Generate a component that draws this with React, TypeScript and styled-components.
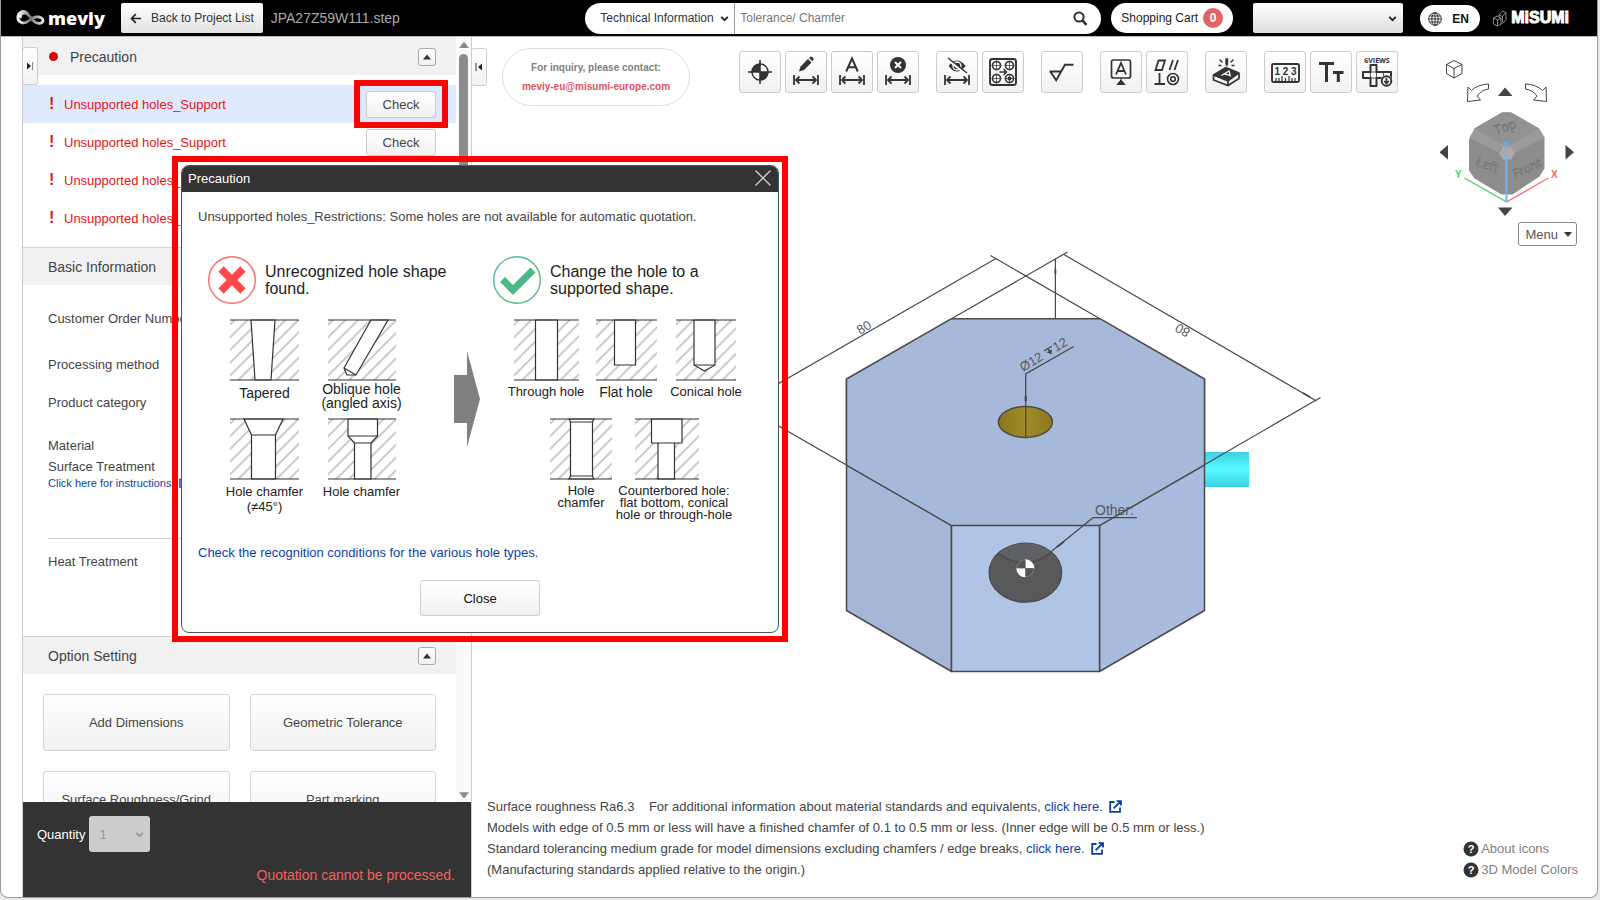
import React from "react";
import styled, { createGlobalStyle, css } from "styled-components";

const GlobalStyle = createGlobalStyle`
  *, *::before, *::after { box-sizing: border-box; }
  html, body, #root { height: 100%; }
  body {
    margin: 0;
    background: #e9e9e9;
    font-family: "Liberation Sans", Arial, sans-serif;
    font-size: 13px;
    color: #444;
  }
  button, input, select { font: inherit; color: inherit; margin: 0; }
  button { cursor: pointer; }
  a { text-decoration: none; }
  svg { display: block; flex: none; }
`;

/* ---------- shell ---------- */

const Shell = styled.div`
  height: calc(100vh - 2px);
  margin-right: 2px;
  display: flex;
  flex-direction: column;
  background: #fff;
  border: 1px solid #9a9a9a;
  border-top: 0;
  border-radius: 0 0 8px 8px;
  overflow: hidden;
`;

const Main = styled.main`
  position: relative;
  flex: 1;
  min-height: 0;
  display: flex;
  padding-left: 21px;
  border-top: 1px solid #bbb;
`;

const raised = css`
  background: linear-gradient(#fff, #f1f1f1);
  border: 1px solid #ccc;
  border-radius: 3px;
`;

/* ---------- top bar ---------- */

const TopBar = styled.header`
  flex: none;
  height: 36px;
  display: flex;
  align-items: center;
  padding: 0 28px 0 15px;
  background: #000;
  font-size: 12px;
`;

const Brand = styled.a`
  display: flex;
  align-items: center;
  gap: 3px;
  width: 105px;
  color: #fff;
  font: 800 18px/30px "Open Sans", sans-serif;
`;

const BackButton = styled.button`
  display: flex;
  align-items: center;
  gap: 9px;
  height: 30px;
  padding: 0 9px;
  border: 0;
  border-radius: 2px;
  background: linear-gradient(#fff, #e2e2e2);
  color: #333;
`;

const FileName = styled.span`
  margin-left: 8px;
  font-size: 14px;
  color: #aaa;
`;

const SearchForm = styled.form`
  display: flex;
  align-items: center;
  width: 516px;
  height: 31px;
  margin-left: auto;
  border-radius: 16px;
  background: #fff;
  overflow: hidden;
`;

const SelectWrap = styled.span<{ $w: number }>`
  position: relative;
  display: flex;
  align-items: center;
  width: ${(p) => p.$w}px;
  height: 100%;
  svg { position: absolute; right: 6px; pointer-events: none; }
`;

const TopicSelect = styled.select`
  appearance: none;
  width: 100%;
  height: 100%;
  padding: 0 16px 0 15px;
  border: 0;
  border-right: 1px solid #999;
  background: transparent;
  color: #333;
`;

const SearchInput = styled.input`
  flex: 1;
  min-width: 0;
  height: 100%;
  padding: 0 5px;
  border: 0;
  outline: 0;
  &::placeholder { color: #777; opacity: 1; }
`;

const BareButton = styled.button`
  padding: 0;
  border: 0;
  background: none;
`;

const SearchButton = styled(BareButton)`
  width: 40px;
  padding-left: 12px;
`;

const CartButton = styled.button`
  display: flex;
  align-items: center;
  gap: 5px;
  height: 30px;
  margin-left: 10px;
  padding: 0 10px;
  border: 0;
  border-radius: 15px;
  background: #fff;
  color: #222;
`;

const CartCount = styled.span`
  width: 20px;
  border-radius: 50%;
  background: #e06464;
  color: #fff;
  font-weight: 700;
  line-height: 20px;
`;

const AccountSlot = styled(SelectWrap)`
  height: 30px;
  margin-left: 20px;
`;

const AccountSelect = styled.select`
  appearance: none;
  width: 100%;
  height: 100%;
  border: 0;
  border-radius: 2px;
  background: linear-gradient(#fff, #dedede);
`;

const LanguageButton = styled.button`
  display: flex;
  align-items: center;
  justify-content: space-between;
  width: 60px;
  height: 27px;
  margin-left: 17px;
  padding: 2px 11px 0 8px;
  border: 0;
  border-radius: 14px;
  background: #fff;
  color: #111;
  font-weight: 700;
`;

const Misumi = styled.a`
  display: flex;
  align-items: center;
  justify-content: space-between;
  width: 76px;
  margin-left: 13px;
  color: #fff;
  font: 800 16px/30px "Liberation Sans", sans-serif;
  -webkit-text-stroke: 1px #fff;
  svg { -webkit-text-stroke: 0; }
`;

/* ---------- side panel ---------- */

const SidePanel = styled.aside`
  position: relative;
  flex: none;
  width: 450px;
  display: flex;
  flex-direction: column;
  border-left: 1px solid #ccc;
  border-right: 1px solid #ccc;
`;

const PanelTab = styled.button<{ $top: number; $left: number }>`
  ${raised}
  position: absolute;
  z-index: 1;
  top: ${(p) => p.$top}px;
  left: ${(p) => p.$left}px;
  width: 16px;
  height: 38px;
  padding: 0 3px;
`;

const ScrollArea = styled.div`
  flex: 1;
  min-height: 0;
  display: flex;
  overflow: hidden;
`;

const Sections = styled.div`
  flex: 1;
`;

const ScrollTrack = styled.div`
  width: 15px;
  display: flex;
  flex-direction: column;
  align-items: center;
  padding: 4px 0;
  background: #fafafa;
`;

const ScrollThumb = styled.div`
  width: 9px;
  height: 460px;
  margin: 5px 0 auto;
  border-radius: 5px;
  background: #8b8b8b;
`;

const SectionHead = styled.h2<{ $line?: boolean }>`
  display: flex;
  align-items: center;
  gap: 12px;
  height: 38px;
  margin: 0;
  padding: 0 20px 0 25px;
  border-top: 1px solid ${(p) => (p.$line ? "#d0d0d0" : "#f1f1f1")};
  background: #f1f1f1;
  font-size: 14px;
  font-weight: 400;
  color: #444;
`;

const RedDot = styled.i`
  width: 9px;
  height: 9px;
  margin-left: 1px;
  border-radius: 50%;
  background: #e60000;
`;

const Collapse = styled.button`
  ${raised}
  width: 18px;
  height: 18px;
  margin-left: auto;
  padding: 0 4px;
  border-color: #aaa;
`;

const Warnings = styled.ul`
  margin: 0;
  padding: 10px 0;
  list-style: none;
`;

const Warning = styled.li<{ $active?: boolean }>`
  display: flex;
  align-items: center;
  height: 38px;
  padding: 0 20px 0 26px;
  background: ${(p) => (p.$active ? "#dfe9fd" : "transparent")};
  color: #e81414;
  b { width: 15px; font-size: 16px; }
`;

const CheckFrame = styled.span<{ $marked?: boolean }>`
  position: relative;
  margin-left: auto;
  ${(p) => p.$marked && css`
    &::after {
      content: "";
      position: absolute;
      inset: -11px -12px -10px;
      border: 6px solid #f00;
      pointer-events: none;
    }
  `}
`;

const CheckButton = styled.button`
  ${raised}
  width: 70px;
  height: 27px;
  padding: 0;
  color: #444;
`;

const InfoList = styled.div`
  height: 351px;
  padding: 23px 20px 0 25px;
`;

const InfoRow = styled.div<{ $h: number }>`
  height: ${(p) => p.$h}px;
  line-height: 22px;
`;

const HelpLink = styled.a`
  display: flex;
  align-items: center;
  gap: 4px;
  height: 12px;
  font-size: 11px;
  color: #0b3fa8;
`;

const Rule = styled.hr`
  margin: 49px 0 12px;
  border: 0;
  border-top: 1px solid #ccc;
`;

const OptionGrid = styled.div`
  display: grid;
  grid-template-columns: 1fr 1fr;
  gap: 20px;
  padding: 20px;
`;

const OptionButton = styled.button`
  ${raised}
  height: 57px;
  border-color: #d4d4d4;
  color: #444;
`;

const QuoteBar = styled.footer`
  flex: none;
  height: 95px;
  display: flex;
  flex-direction: column;
  justify-content: space-between;
  padding: 14px 16px 14px;
  background: #333;
  color: #fff;
`;

const QuantityRow = styled.div`
  display: flex;
  align-items: center;
  gap: 4px;
  height: 36px;
  margin-left: -2px;
`;

const QuantitySelect = styled.select`
  appearance: none;
  width: 100%;
  height: 100%;
  padding: 0 10px;
  border: 0;
  border-radius: 3px;
  background: #ccc;
  color: #999;
  opacity: 1;
`;

const QuoteError = styled.p`
  margin: 0;
  text-align: right;
  font-size: 14px;
  color: #f0625f;
`;

/* ---------- viewer ---------- */

const Viewer = styled.section`
  position: relative;
  flex: 1;
  min-width: 0;
  display: flex;
  flex-direction: column;
`;

const Stage = styled.div`
  flex: 1;
  min-height: 0;
  display: flex;
  justify-content: space-between;
`;

const StageLeft = styled.div`
  display: flex;
  flex-direction: column;
`;

const ToolRow = styled.div`
  display: flex;
  align-items: flex-start;
  padding: 11px 0 0 30px;
`;

const Contact = styled.address`
  display: flex;
  flex-direction: column;
  align-items: center;
  justify-content: center;
  width: 188px;
  height: 58px;
  border: 1px solid #ddd;
  border-radius: 29px;
  font-size: 10px;
  font-style: normal;
  font-weight: 700;
  line-height: 19px;
  white-space: nowrap;
  color: #808080;
  a { color: #e0525c; }
`;

const Tools = styled.div`
  display: flex;
  gap: 17px;
  margin: 3px 0 0 49px;
`;

const ToolGroup = styled.div`
  display: flex;
  gap: 4px;
`;

const ToolButton = styled.button`
  ${raised}
  width: 42px;
  height: 42px;
  padding: 0;
  svg { margin: -1px; }
`;

const Model = styled.svg`
  margin: 129px 0 0 298px;
`;

const NavColumn = styled.div`
  display: flex;
  flex-direction: column;
  align-items: flex-end;
  padding: 22px 20px 0 0;
  > svg { margin: 0 1px 1px 0; }
`;

const MenuButton = styled.button`
  display: flex;
  align-items: center;
  gap: 6px;
  height: 24px;
  padding: 0 4px 0 6px;
  border: 1px solid #888;
  border-radius: 3px;
  background: #fff;
  color: #555;
`;

const BottomRow = styled.div`
  display: flex;
  justify-content: space-between;
  align-items: flex-end;
  padding: 0 19px 17px 15px;
  line-height: 21px;
`;

const Notes = styled.div`
  p { display: flex; align-items: center; margin: 0; white-space: pre; }
  a { color: #0b3fa8; }
  svg { margin-left: 6px; }
`;

const Legend = styled.nav`
  a { display: flex; align-items: center; gap: 2px; color: #808080; }
`;

/* ---------- dialog ---------- */

const DialogMark = styled.div`
  position: absolute;
  z-index: 2;
  top: 119px;
  left: 171px;
  width: 616px;
  padding: 3px;
  border: 6px solid #f00;
`;

const Dialog = styled.div`
  border: 1px solid #555;
  border-radius: 8px;
  background: #fff;
  overflow: hidden;
`;

const DialogHead = styled.div`
  display: flex;
  align-items: center;
  justify-content: space-between;
  height: 26px;
  padding: 0 7px 2px 6px;
  background: #333;
  color: #fff;
`;

const DialogBody = styled.div`
  padding: 17px 16px 16px;
  p { margin: 0; line-height: 16px; }
`;

const Guide = styled.div`
  display: grid;
  grid-template-columns: 246px 39px 260px;
  padding: 31px 0 0 10px;
  height: 320px;
  color: #222;
`;

const GuideHead = styled.div`
  display: flex;
  gap: 9px;
  height: 63px;
  font-size: 16px;
  line-height: 17px;
  span { padding-top: 7px; }
`;

const Figures = styled.div<{ $cols: string; $inset: number; $h: number }>`
  display: grid;
  grid-template-columns: ${(p) => p.$cols};
  height: ${(p) => p.$h}px;
  padding-left: ${(p) => p.$inset}px;
`;

const Figure = styled.figure`
  display: flex;
  flex-direction: column;
  align-items: center;
  margin: 0;
`;

const Caption = styled.figcaption<{ $size: number; $line: number; $pad: number; $indent?: number }>`
  padding-top: ${(p) => p.$pad}px;
  padding-left: ${(p) => p.$indent ?? 0}px;
  font-size: ${(p) => p.$size}px;
  line-height: ${(p) => p.$line}px;
  text-align: center;
  white-space: pre;
`;

const ArrowCell = styled.div`
  padding-top: 95px;
`;

const ConditionLink = styled.a`
  display: block;
  line-height: 16px;
  color: #0b3fa8;
`;

const CloseButton = styled.button`
  ${raised}
  display: block;
  width: 120px;
  height: 36px;
  margin: 19px auto 0;
  color: #111;
`;

/* ---------- drawings ---------- */

const Chevron = ({ color = "#222" }: { color?: string }) => (
  <svg width="9" height="9" viewBox="0 0 9 9"><path d="M1.2 2.8 4.5 6.2 7.8 2.8" fill="none" stroke={color} strokeWidth="1.8" /></svg>
);

const Triangle = ({ down, w = 8, color = "#333" }: { down?: boolean; w?: number; color?: string }) => (
  <svg width={w} height={w * 0.75} viewBox="0 0 8 6"><path d={down ? "M0 1h8L4 6z" : "M0 5.5h8L4 .5z"} fill={color} /></svg>
);

const OpenIcon = ({ size = 13 }: { size?: number }) => (
  <svg width={size} height={size} viewBox="0 0 13 13" fill="none" stroke="#0b3fa8" strokeWidth="1.8">
    <path d="M5.5 2H1.2v9.8H11V7.5M4.6 8.4 11.5 1.5M7.6 1.1H12v4.4" />
  </svg>
);

const HelpDot = () => (
  <svg width="16" height="16" viewBox="0 0 16 16">
    <circle cx="8" cy="8" r="7.5" fill="#333" />
    <text x="8" y="12" textAnchor="middle" fontSize="11" fontWeight="700" fill="#fff">?</text>
  </svg>
);

const MeviyMark = () => (
  <svg width="29" height="16" viewBox="0 0 29 16" fill="none" strokeLinecap="round">
    <defs><linearGradient id="mv"><stop stopColor="#fff" /><stop offset=".5" stopColor="#777" /><stop offset="1" stopColor="#e8e4ea" /></linearGradient></defs>
    <path d="M11.500 3.200C9 1 6 1.200 4 2.800S1.200 7.500 2.500 10s4.500 3.500 7.500 2.500S15.500 7.500 20 7s7.500 1.500 7 4-5 3.200-8 1.200C15 9.500 14 5 10.500 3.500S4.500 4 4.500 7" stroke="url(#mv)" strokeWidth="2.800" />
  </svg>
);

const MisumiMark = () => (
  <svg width="14" height="17" viewBox="0 0 14 17" fill="none" stroke="#aaa" strokeWidth=".8">
    <path d="M.5 8 4 6l4 2.200v6L4.500 16 .5 14zM.5 8l4 2v6M4.500 10 8 8.200M6 5l3.500-4L13 2.500v8L8 14M6 5l3.500 1.500L13 2.500M9.500 6.500V12M6 5v2" />
  </svg>
);

const GlobeMark = () => (
  <svg width="14" height="14" viewBox="0 0 14 14" fill="none" stroke="#222" strokeWidth=".9">
    <circle cx="7" cy="7" r="6.300" /><ellipse cx="7" cy="7" rx="3.200" ry="6.300" /><path d="M7 .7v12.600M.7 7h12.600M1.500 4h11M1.500 10h11" />
  </svg>
);

const ink = "#333";
const Dim = () => (
  <path d="M9 24v10M33 24v10M11 29h20M14.500 25.500 11 29l3.500 3.500M27.500 25.500 31 29l-3.500 3.500" stroke={ink} strokeWidth="1.800" fill="none" />
);

const toolIcons: Record<string, React.ReactNode> = {
  Origin: <><circle cx="21" cy="21" r="8" fill="#fff" stroke={ink} strokeWidth="1.500" /><path d="M21 21V12.500A8.500 8.500 0 0 0 12.500 21zM21 21v8.500a8.500 8.500 0 0 0 8.500-8.500z" fill={ink} /><path d="M21 9v24M9 21h24" stroke={ink} strokeWidth="1.600" /></>,
  "Edit dimension": <><path d="M14 20.500l1.500-5 7.500-7.500 3.500 3.500-7.500 7.500zM24 7l1.500-1.200q1-.6 2.300.7 1.200 1.300.7 2.200L27.300 10.300z" fill={ink} /><Dim /></>,
  "Text dimension": <><path d="M15.200 20.500 21 7.500l5.800 13M17.200 16.200h7.600" fill="none" stroke={ink} strokeWidth="2" /><Dim /></>,
  "Delete dimension": <><circle cx="21" cy="14" r="8" fill={ink} /><path d="m18 11 6 6m0-6-6 6" stroke="#fff" strokeWidth="2" /><Dim /></>,
  "Hide dimension": <><path d="M12.500 15q8.500-11 17 0-8.500 11-17 0z" fill={ink} /><circle cx="21" cy="15" r="4" fill={ink} stroke="#fff" strokeWidth="1.300" /><path d="m11 8 19 15" stroke="#fff" strokeWidth="2.500" /><path d="m12 7 19 15" stroke={ink} strokeWidth="1.500" /><Dim /></>,
  "Hole groups": <><rect x="8" y="8" width="26" height="26" rx="2.500" fill="none" stroke={ink} strokeWidth="1.900" />{[[14.5, 14.5], [27.5, 14.5], [14.5, 27.5], [27.5, 27.5]].map(([x, y]) => <g key={`${x}-${y}`}><circle cx={x} cy={y} r="4" fill="none" stroke={ink} strokeWidth="1.600" /><path d={`M${x - 5} ${y}h10M${x} ${y - 5}v10`} stroke={ink} strokeWidth=".7" /></g>)}<circle cx="27.500" cy="27.500" r="2" fill={ink} /><path d="M17.500 21h7M21.500 18l3 3-3 3" stroke={ink} strokeWidth="1.500" fill="none" /></>,
  Roughness: <path d="M8.500 20.500H20M9.300 20.500l5.900 8.800L24 13.800h8.500" fill="none" stroke={ink} strokeWidth="1.900" />,
  "Datum label": <><rect x="11.500" y="9" width="19" height="18" rx="2" fill="none" stroke={ink} strokeWidth="1.700" /><path d="M16 23.500 21 12l5 11.500M17.800 20h6.400" fill="none" stroke={ink} strokeWidth="1.800" /><path d="M21 27v4M17 33.500l4-4.500 4 4.500z" fill={ink} stroke={ink} strokeWidth="1" /></>,
  "Geometric tolerance": <><path d="m12.500 9.500h6.500l-3 9.500H9.500zM27 9l-3.500 10M32 9l-3.500 10M13.500 22v11M8.500 33h10.500" fill="none" stroke={ink} strokeWidth="1.800" /><circle cx="27" cy="28" r="5.500" fill="none" stroke={ink} strokeWidth="1.600" /><circle cx="27" cy="28" r="2.300" fill="none" stroke={ink} strokeWidth="1.600" /></>,
  "Part marking": <><path d="M8.500 24 21 16.500l13 5.500-11 8z" fill={ink} stroke={ink} strokeWidth="1.500" strokeLinejoin="round" /><path d="M8.500 24v5l14.500 5.500L34 27.500V22M23 30v4.500" fill="none" stroke={ink} strokeWidth="1.700" /><path d="m16.500 24.500 7.500-4.500 1.500 5.500M19.500 23l5 1.200" fill="none" stroke="#fff" strokeWidth="1.300" /><path d="M20 7h3.500v6l-1.700 3.500L20 13z" fill={ink} stroke="#fafafa" strokeWidth=".6" /><path d="m14.500 8.500 3 3M28.500 8.500l-3 3M13.500 14.500h3M26.500 14.500h3" stroke={ink} strokeWidth="1.400" /></>,
  Ruler: <><rect x="8" y="13" width="27" height="18" rx="1.500" fill="none" stroke={ink} strokeWidth="1.900" /><text x="21.500" y="23.500" textAnchor="middle" fontSize="10" fontWeight="700" fill={ink}>1 2 3</text><path d="M12 30v-3M15 30v-3M18 30v-5M21.500 30v-3M25 30v-5M28 30v-3M31 30v-3" stroke={ink} strokeWidth="1.200" /></>,
  "Text size": <path d="M9 12.500h15M16.500 12v19M23 21.500h10.500M28.300 21v10" stroke={ink} strokeWidth="3" fill="none" />,
  "Six views": <><text x="21" y="11.500" textAnchor="middle" fontSize="7" fontWeight="700" fill={ink} fontFamily="Open Sans">6VIEWS</text><path d="M14.500 14h6v7H35v6H20.500v8h-6v-8H7v-6h7.500z" fill="none" stroke={ink} strokeWidth="2" strokeLinejoin="round" /><path d="M14.500 21h6M14.500 27h6M14.500 21v6M20.500 21v6M27.500 21v5" fill="none" stroke={ink} strokeWidth=".8" /><circle cx="30.500" cy="30" r="6" fill="#f4f4f4" /><circle cx="30.500" cy="30" r="4.800" fill="none" stroke={ink} strokeWidth="1.900" /><path d="M30.500 27v5.500M28.200 30l2.300 2.500 2.300-2.500" fill="none" stroke={ink} strokeWidth="1.600" /></>,
};

const toolGroups = [
  ["Origin", "Edit dimension", "Text dimension", "Delete dimension"],
  ["Hide dimension", "Hole groups"],
  ["Roughness"],
  ["Datum label", "Geometric tolerance"],
  ["Part marking"],
  ["Ruler", "Text size", "Six views"],
];

const edge = "#4a4a4a";

const PartModel = () => (
  <Model width="560" height="440" viewBox="770 235 560 440" fill="none" stroke={edge}>
    <defs>
      <linearGradient id="boss" x2="0" y2="1"><stop stopColor="#3fd0e0" /><stop offset=".5" stopColor="#55fbff" /><stop offset="1" stopColor="#3fd0e0" /></linearGradient>
      <linearGradient id="bore"><stop stopColor="#87761e" /><stop offset=".5" stopColor="#a08c28" /><stop offset="1" stopColor="#8a7820" /></linearGradient>
    </defs>
    <rect x="1205" y="452" width="44" height="35" fill="url(#boss)" stroke="none" />
    <g strokeWidth="1.500" strokeLinejoin="round">
      <path d="M846.500 379v231.500l105 61V525.500L846.500 465" fill="#a5b6d7" />
      <path d="M1204.500 379v231.500l-105 61V525.500l105-60.500" fill="#a9bcdf" />
      <path d="M846.500 379l105-60.300H1100L1204.500 379V465l-105 60.500h-148L846.500 465z" fill="#a7b9da" stroke="none" />
      <path d="M846.500 465V379l105-60.300H1100L1204.500 379v86" />
      <path d="M951.500 525.500h148v146h-148z" fill="#b0c4e6" />
    </g>
    <g strokeWidth="1.200">
      <path d="M770 388.500 996 258.500M990.500 255.500 1100 318.700M770 421l181.500 104.500M951.500 318.700 1067.500 252M1063 254l253.500 147M1320.500 397.500 1099.500 525.500M1055.400 259v59.700" />
      <path d="M1055.400 269v5M1303 393l7 4" strokeWidth="1.800" />
    </g>
    <ellipse cx="1025.400" cy="422" rx="27" ry="15.500" fill="url(#bore)" strokeWidth="1.500" />
    <path d="M1025.700 438v-64l48-27.500" strokeWidth="1.300" />
    <path d="M1025.700 396v5" strokeWidth="2.200" />
    <ellipse cx="1025.400" cy="572.700" rx="36.300" ry="29.500" fill="#57595b" strokeWidth="1.200" />
    <path d="M998.600 553.300q27 20 53-1.500Q1025.500 534 998.600 553.300" fill="#5f6163" stroke="none" />
    <path d="M998.600 553.300q27 20 53-1.500" strokeWidth="1.200" />
    <path d="M1137 517.700h-44l-42 34" strokeWidth="1.200" />
    <path d="m1057 547 7-5.500" strokeWidth="2.200" />
    <circle cx="1025.400" cy="568.300" r="9" fill="#777" stroke="none" />
    <path d="M1025.400 568.300v-9a9 9 0 0 1 9 9zM1025.400 568.300v9a9 9 0 0 1-9-9z" fill="#fff" stroke="none" />
    <path d="M1025.400 568.300v-8a8 8 0 0 0-8 8zM1025.400 568.300v8a8 8 0 0 0 8-8z" fill="#555" stroke="none" />
    <g fill="#5a5a5a" stroke="none" fontSize="14">
      <text transform="translate(860 335) rotate(-31)" fontSize="13">80</text>
      <text transform="translate(1191 330) rotate(210)" fontSize="13">80</text>
      <text transform="translate(1023 372) rotate(-31)" fontSize="13">Ø12</text>
      <text transform="translate(1056 352) rotate(-31)" fontSize="13">12</text>
      <text x="1095" y="515">Other:</text>
    </g>
    <g transform="translate(1050 352) rotate(-31)">
      <path d="M-4.500-4h9M0-4v4" strokeWidth="1.300" />
      <path d="M-3-1.500h6L0 3z" fill={edge} stroke="none" />
    </g>
  </Model>
);

const NavCube = () => (
  <svg width="136" height="162" viewBox="1440 60 136 162">
    <g fill="none" stroke="#444" strokeWidth="1">
      <path d="m1446.500 65.500 7.500-4 8 4v9l-8 4.500-7.500-4.500zM1446.500 65.500l7.500 4 8-4M1454 69.500V79" />
      <path d="M1488.500 85v5q-7 1-11.500 7l3.500 4-13 1.500 .5-14.500 3.500 3.500q6-6 17-6.500z" />
      <path d="M1525.500 85v5q7 1 11.500 7l-3.500 4 13 1.500-.5-14.500-3.500 3.500q-6-6-17-6.500z" />
    </g>
    <path d="M1498 97h14.500L1505 88.500zM1498 208.500h14.500L1505 217zM1448 146v14.500l-8.500-7.200zM1565.500 146v14.500l8.500-7.200z" fill="#444" />
    <path d="M1502 113.500h9l28 16 5.500 9v31l-5 8-27 18h-11l-27-16-5.500-8v-31l5-9z" fill="#8d8d8d" />
    <path d="M1502 113.500h9l28 16 5.500 9-30 15-4-6h-8l-4 6-29-15 5-9z" fill="#9b9b9b" />
    <path d="M1502 113.500h9l28 16-28 16h-9l-28-16z" fill="#929292" />
    <path d="M1503 147.500h8l4 7-4 6h-8l-4-6z" fill="#aaa" />
    <g fill="#9c9c9c" stroke="#6a6a6a" strokeWidth=".5" fontSize="13" fontFamily="Open Sans">
      <text transform="translate(1496 136) rotate(-20)">Top</text>
      <text transform="translate(1475 166) rotate(20)">Left</text>
      <text transform="translate(1515 179) rotate(-24)" fontSize="12">Front</text>
    </g>
    <g strokeWidth="1.400">
      <path d="M1506.500 203V156" stroke="#6fb3f5" strokeWidth="2" />
      <path d="m1506.500 203-42-24" stroke="#48cf72" />
      <path d="m1506.500 203 42-24" stroke="#ff7070" />
    </g>
    <g fontSize="10" fontWeight="700">
      <text x="1503" y="151" fill="#6fb3f5">Z</text>
      <text x="1455" y="179" fill="#48cf72">Y</text>
      <text x="1551" y="179" fill="#ff6060">X</text>
    </g>
  </svg>
);

const HoleDrawing = ({ w, hole, lines }: { w: number; hole: string; lines?: string }) => (
  <svg width={w} height="62" viewBox={`0 0 ${w} 62`} fill="none" stroke="#333" strokeWidth="1.200">
    <defs>
      <pattern id={`hatch${w}`} width="9" height="9" patternUnits="userSpaceOnUse" patternTransform="rotate(45)">
        <path d="M4 0v9" stroke="#8a8a8a" strokeWidth=".9" />
      </pattern>
    </defs>
    <rect width={w} height="60" y="1" fill={`url(#hatch${w})`} stroke="none" />
    <path d={hole} fill="#fff" />
    <path d={`M0 1h${w}M0 61h${w}${lines ?? ""}`} />
  </svg>
);

const BadMark = () => (
  <svg width="48" height="48" viewBox="0 0 48 48">
    <circle cx="24" cy="24" r="23.300" fill="none" stroke="#ff6a6a" strokeWidth="1.400" />
    <path d="m13 13 22 22M35 13 13 35" stroke="#ff4a4a" strokeWidth="7.500" />
  </svg>
);

const GoodMark = () => (
  <svg width="48" height="48" viewBox="0 0 48 48">
    <circle cx="24" cy="24" r="23.300" fill="none" stroke="#55bd8c" strokeWidth="1.400" />
    <path d="m9.500 23.500 10.500 10.500L40 14" fill="none" stroke="#4cb885" strokeWidth="7" />
  </svg>
);

/* ---------- parts ---------- */

const Header = () => (
  <TopBar>
    <Brand href="#home"><MeviyMark />meviy</Brand>
    <BackButton type="button">
      <svg width="12" height="11" viewBox="0 0 12 11"><path d="M11 5.500H2M5.800 1.200 1.500 5.500l4.300 4.300" fill="none" stroke="#222" strokeWidth="1.700" /></svg>
      Back to Project List
    </BackButton>
    <FileName>JPA27Z59W111.step</FileName>
    <SearchForm role="search">
      <SelectWrap $w={150}>
        <TopicSelect aria-label="Search category"><option>Technical Information</option></TopicSelect>
        <Chevron />
      </SelectWrap>
      <SearchInput aria-label="Search" placeholder="Tolerance/ Chamfer" />
      <SearchButton type="button" aria-label="Run search">
        <svg width="15" height="15" viewBox="0 0 15 15" fill="none" stroke="#333"><circle cx="6" cy="6" r="4.600" strokeWidth="2" /><path d="m9.300 9.300 4.200 4.500" strokeWidth="2.600" /></svg>
      </SearchButton>
    </SearchForm>
    <CartButton type="button">Shopping Cart <CartCount>0</CartCount></CartButton>
    <AccountSlot $w={150}>
      <AccountSelect aria-label="Account" />
      <Chevron />
    </AccountSlot>
    <LanguageButton type="button"><GlobeMark />EN</LanguageButton>
    <Misumi href="#misumi"><MisumiMark />MiSUMi</Misumi>
  </TopBar>
);

const Side = () => (
  <SidePanel>
    <PanelTab type="button" aria-label="Expand panel" $top={10} $left={-1}>
      <svg width="8" height="10" viewBox="0 0 8 10"><path d="M1 1.500v7L5 5z" fill="#222" /><path d="M6.500 1v8" stroke="#888" /></svg>
    </PanelTab>
    <ScrollArea>
      <Sections>
        <SectionHead>
          <RedDot />Precaution
          <Collapse type="button" aria-label="Collapse Precaution"><Triangle /></Collapse>
        </SectionHead>
        <Warnings>
          {[0, 1, 2, 3].map((i) => (
            <Warning key={i} $active={i === 0}>
              <b>!</b>Unsupported holes_Support
              <CheckFrame $marked={i === 0}><CheckButton type="button">Check</CheckButton></CheckFrame>
            </Warning>
          ))}
        </Warnings>
        <SectionHead $line>Basic Information</SectionHead>
        <InfoList>
          <InfoRow $h={46}>Customer Order Number</InfoRow>
          <InfoRow $h={38}>Processing method</InfoRow>
          <InfoRow $h={43}>Product category</InfoRow>
          <InfoRow $h={21}>Material</InfoRow>
          <InfoRow $h={21}>Surface Treatment</InfoRow>
          <HelpLink href="#instructions">Click here for instructions. <OpenIcon size={10} /></HelpLink>
          <Rule />
          <InfoRow $h={22}>Heat Treatment</InfoRow>
        </InfoList>
        <SectionHead $line>
          Option Setting
          <Collapse type="button" aria-label="Collapse Option Setting"><Triangle /></Collapse>
        </SectionHead>
        <OptionGrid>
          {["Add Dimensions", "Geometric Tolerance", "Surface Roughness/Grind", "Part marking"].map((t) => (
            <OptionButton key={t} type="button">{t}</OptionButton>
          ))}
        </OptionGrid>
      </Sections>
      <ScrollTrack>
        <Triangle w={10} color="#8b8b8b" />
        <ScrollThumb />
        <Triangle w={10} color="#8b8b8b" down />
      </ScrollTrack>
    </ScrollArea>
    <QuoteBar>
      <QuantityRow>
        <label htmlFor="qty">Quantity</label>
        <SelectWrap $w={61}>
          <QuantitySelect id="qty" disabled><option>1</option></QuantitySelect>
          <Chevron color="#999" />
        </SelectWrap>
      </QuantityRow>
      <QuoteError>Quotation cannot be processed.</QuoteError>
    </QuoteBar>
  </SidePanel>
);

const ModelViewer = () => (
  <Viewer>
    <PanelTab type="button" aria-label="Collapse panel" $top={11} $left={-1}>
      <svg width="8" height="10" viewBox="0 0 8 10"><path d="M7 1.500v7L3 5z" fill="#222" /><path d="M1 1v8" stroke="#333" /></svg>
    </PanelTab>
    <Stage>
      <StageLeft>
        <ToolRow>
          <Contact>
            For inquiry, please contact:
            <a href="mailto:meviy-eu@misumi-europe.com">meviy-eu@misumi-europe.com</a>
          </Contact>
          <Tools>
            {toolGroups.map((g) => (
              <ToolGroup key={g[0]}>
                {g.map((name) => (
                  <ToolButton key={name} type="button" aria-label={name}>
                    <svg width="42" height="42" viewBox="0 0 42 42">{toolIcons[name]}</svg>
                  </ToolButton>
                ))}
              </ToolGroup>
            ))}
          </Tools>
        </ToolRow>
        <PartModel />
      </StageLeft>
      <NavColumn>
        <NavCube />
        <MenuButton type="button">Menu <Triangle down /></MenuButton>
      </NavColumn>
    </Stage>
    <BottomRow>
      <Notes>
        <p>Surface roughness Ra6.3{"\u00a0\u00a0\u00a0 "}For additional information about material standards and equivalents,{" "}<a href="#materials">click here.</a><OpenIcon /></p>
        <p>Models with edge of 0.5 mm or less will have a finished chamfer of 0.1 to 0.5 mm or less. (Inner edge will be 0.5 mm or less.)</p>
        <p>Standard tolerancing medium grade for model dimensions excluding chamfers / edge breaks,{" "}<a href="#tolerances">click here.</a><OpenIcon /></p>
        <p>(Manufacturing standards applied relative to the origin.)</p>
      </Notes>
      <Legend>
        <a href="#icons"><HelpDot />About icons</a>
        <a href="#colors"><HelpDot />3D Model Colors</a>
      </Legend>
    </BottomRow>
  </Viewer>
);

const PrecautionDialog = () => (
  <DialogMark>
    <Dialog role="dialog" aria-labelledby="dialog-title">
      <DialogHead>
        <span id="dialog-title">Precaution</span>
        <BareButton type="button" aria-label="Close dialog">
          <svg width="16" height="16" viewBox="0 0 16 16"><path d="m.5.5 15 15m0-15-15 15" stroke="#ccc" strokeWidth="1.400" /></svg>
        </BareButton>
      </DialogHead>
      <DialogBody>
        <p>Unsupported holes_Restrictions: Some holes are not available for automatic quotation.</p>
        <Guide>
          <div>
            <GuideHead><BadMark /><span>Unrecognized hole shape<br />found.</span></GuideHead>
            <Figures $cols="97px 97px" $inset={8} $h={99}>
              <Figure>
                <HoleDrawing w={69} hole="M21 1l4 60h16l4-60z" />
                <Caption $size={14} $line={14} $pad={5}>Tapered</Caption>
              </Figure>
              <Figure>
                <HoleDrawing w={68} hole="M43 1 16 49l3 7h9L60 1z" lines="M16 49l12 7" />
                <Caption $size={14} $line={14} $pad={1}>{"Oblique hole\n(angled axis)"}</Caption>
              </Figure>
            </Figures>
            <Figures $cols="97px 97px" $inset={8} $h={100}>
              <Figure>
                <HoleDrawing w={69} hole="M14 1l7.500 16v44h24V17L53 1z" lines="M21.500 17h24" />
                <Caption $size={13} $line={15} $pad={4}>{"Hole chamfer\n(≠45°)"}</Caption>
              </Figure>
              <Figure>
                <HoleDrawing w={68} hole="M20 1v17l6.500 7v36H43V25l6.500-7V1z" lines="M20 18h29.500M26.500 25H43" />
                <Caption $size={13} $line={15} $pad={4}>Hole chamfer</Caption>
              </Figure>
            </Figures>
          </div>
          <ArrowCell>
            <svg width="26" height="96" viewBox="0 0 26 96"><path d="M0 24h13V0l13 48-13 48V72H0z" fill="#808080" /></svg>
          </ArrowCell>
          <div>
            <GuideHead><GoodMark /><span>Change the hole to a<br />supported shape.</span></GuideHead>
            <Figures $cols="80px 80px 80px" $inset={13} $h={99}>
              <Figure>
                <HoleDrawing w={65} hole="M21.500 1v60h22V1z" />
                <Caption $size={13} $line={14} $pad={4}>Through hole</Caption>
              </Figure>
              <Figure>
                <HoleDrawing w={61} hole="M18.500 1v45h21V1z" />
                <Caption $size={14} $line={14} $pad={4}>Flat hole</Caption>
              </Figure>
              <Figure>
                <HoleDrawing w={60} hole="M18 1v45l10.500 6L39 46V1z" lines="M18 46h21" />
                <Caption $size={13} $line={14} $pad={4}>Conical hole</Caption>
              </Figure>
            </Figures>
            <Figures $cols="62px 110px" $inset={57} $h={100}>
              <Figure>
                <HoleDrawing w={62} hole="M19 1l1.500 3v54L19 61h25l-1.500-3V4L44 1z" lines="M20.500 4h22M20.500 58h22" />
                <Caption $size={13} $line={12} $pad={5}>{"Hole\nchamfer"}</Caption>
              </Figure>
              <Figure>
                <HoleDrawing w={64} hole="M16.500 1v24H23v36h16.500V25H47V1z" lines="M23 25h16.500" />
                <Caption $size={13} $line={12} $pad={5} $indent={14}>{"Counterbored hole:\nflat bottom, conical\nhole or through-hole"}</Caption>
              </Figure>
            </Figures>
          </div>
        </Guide>
        <ConditionLink href="#conditions">Check the recognition conditions for the various hole types.</ConditionLink>
        <CloseButton type="button">Close</CloseButton>
      </DialogBody>
    </Dialog>
  </DialogMark>
);

export default function App() {
  return (
    <>
      <GlobalStyle />
      <Shell>
        <Header />
        <Main>
          <Side />
          <ModelViewer />
          <PrecautionDialog />
        </Main>
      </Shell>
    </>
  );
}
